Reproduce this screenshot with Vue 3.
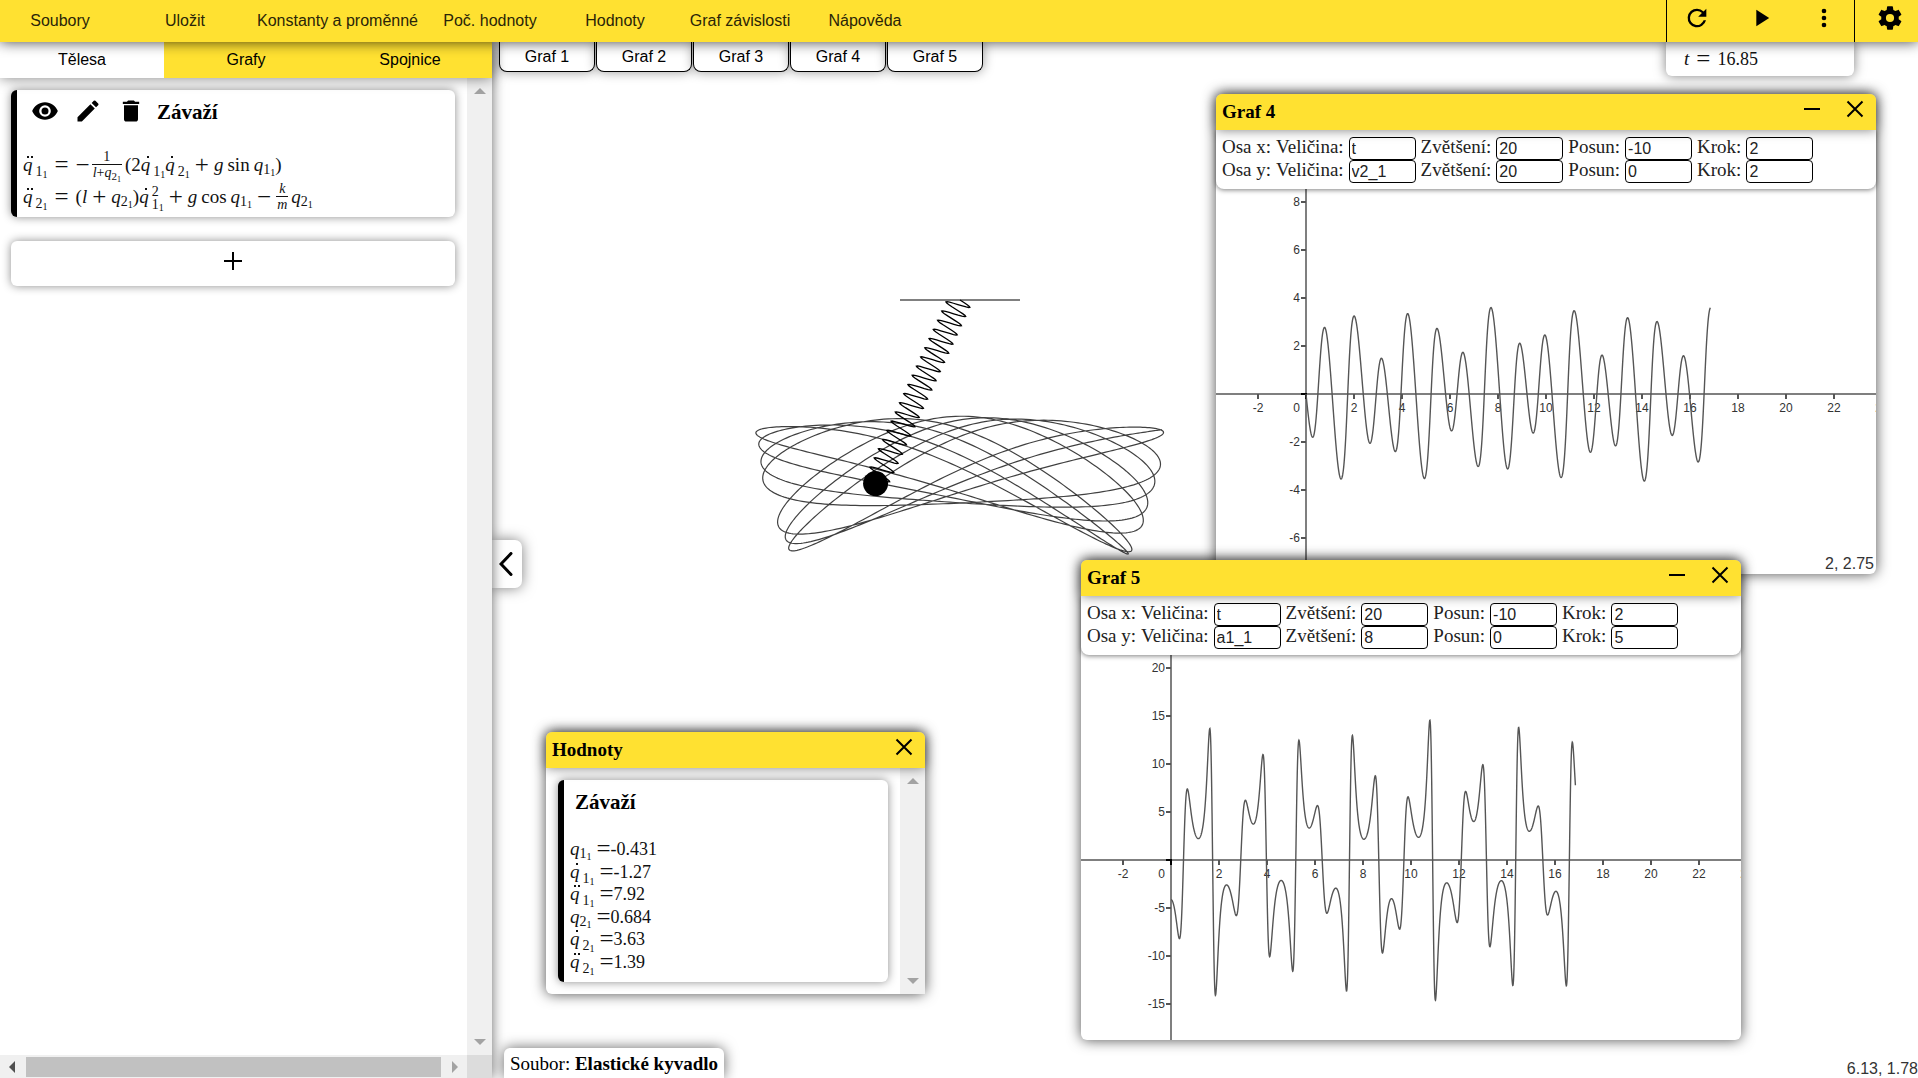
<script setup>
import { h } from 'vue'

/* Elastic pendulum: q1 angle, q2 spring extension */
const L = 1
const G = 9.81
const K = 15
const END = 16.85
const STEP = 0.0002
const SAMPLE = 50

function simulate() {
  let q1 = 1
  let q2 = 1
  let v1 = 0
  let v2 = 0
  const out = []
  const n = Math.round(END / STEP)
  for (let i = 0; i <= n; i++) {
    const a1 = -(2 * v1 * v2 + G * Math.sin(q1)) / (L + q2)
    const a2 = (L + q2) * v1 * v1 + G * Math.cos(q1) - K * q2
    if (i % SAMPLE === 0) out.push({ t: i * STEP, q1, q2, v2, a1 })
    q1 += v1 * STEP
    q2 += v2 * STEP
    v1 += a1 * STEP
    v2 += a2 * STEP
  }
  return out
}

const samples = simulate()
const current = { q1: -0.431, q2: 0.684 }
const toPath = (pts) => 'M' + pts.map(([x, y]) => x.toFixed(2) + ' ' + y.toFixed(2)).join('L')

/* Scene, relative to the pivot */
const SCALE = 120
const place = (s) => [SCALE * (L + s.q2) * Math.sin(s.q1), SCALE * (L + s.q2) * Math.cos(s.q1)]
const trail = toPath(samples.map(place))
const ball = place(current)

function springPath([bx, by]) {
  const len = Math.hypot(bx, by)
  const ux = bx / len
  const uy = by / len
  const coils = 20
  const n = coils * 16
  const pts = []
  for (let i = 0; i <= n; i++) {
    const s = (len * i) / n
    const w = 12 * Math.sin((2 * Math.PI * coils * i) / n)
    pts.push([ux * s + uy * w, uy * s - ux * w])
  }
  return toPath(pts)
}
const spring = springPath(ball)

/* Graph windows */
const UNIT = 1.2
const ORIGIN_X = 90
const ORIGIN_Y = 205

function makeGraph(id, left, top, key, ySize, yStep, quantity, cursor) {
  const sx = 20 * UNIT
  const sy = ySize * UNIT
  const xTicks = []
  for (let v = -2; v <= 24; v += 2) if (v) xTicks.push({ v, x: ORIGIN_X + v * sx })
  const yTicks = []
  for (let i = -3; i <= 4; i++) if (i) yTicks.push({ v: i * yStep, y: ORIGIN_Y - i * yStep * sy })
  return {
    id, left, top, cursor, xTicks, yTicks,
    curve: toPath(samples.map((s) => [ORIGIN_X + s.t * sx, ORIGIN_Y - s[key] * sy])),
    rows: [
      { axis: 'Osa x:', fields: [['Veličina:', 't'], ['Zvětšení:', '20'], ['Posun:', '-10'], ['Krok:', '2']] },
      { axis: 'Osa y:', fields: [['Veličina:', quantity], ['Zvětšení:', String(ySize)], ['Posun:', '0'], ['Krok:', String(yStep)]] },
    ],
  }
}
const graphs = [
  makeGraph('Graf 4', 724, 52, 'v2', 20, 2, 'v2_1', '2, 2.75'),
  makeGraph('Graf 5', 589, 518, 'a1', 8, 5, 'a1_1', ''),
]

/* Formula markup */
const q = (sub, dots = 0, sup = '') => ({ kind: 'q', sub, dots, sup })
const bin = (text) => ({ kind: 'bin', text })
const rel = (text) => ({ kind: 'rel', text })
const neg = { kind: 'neg', text: '−' }
const it = (text) => ({ kind: 'it', text })
const fn = (text) => ({ kind: 'fn', text })
const rm = (text) => ({ kind: 'rm', text })
const num = (text) => ({ kind: 'num', text })
const frac = (top, bottom) => ({ kind: 'frac', top, bottom })

function token(t) {
  if (t.kind === 'q') {
    const subs = h('span', { class: 'sub' }, [t.sub, h('span', { class: 'subsub' }, '1')])
    return h('span', { class: 'var' }, [
      h('span', { class: ['q', 'dots' + t.dots] }, 'q'),
      t.sup
        ? h('span', { class: 'stack' }, [h('span', { class: 'sup' }, t.sup), subs])
        : h('span', { class: t.dots ? 'low' : 'near' }, [subs]),
    ])
  }
  if (t.kind === 'frac') {
    return h('span', { class: 'frac' }, [
      h('span', { class: 'top' }, t.top.map(token)),
      h('span', { class: 'bottom' }, t.bottom.map(token)),
    ])
  }
  return h('span', { class: t.kind }, t.text)
}
const Formula = (props) => h('div', { class: 'formula' }, props.tokens.map(token))
Formula.props = ['tokens']

const equations = [
  [q('1', 2), rel('='), neg, frac([rm('1')], [it('l'), rm('+'), q('2')]), rm('(2'), q('1', 1), q('2', 1), bin('+'), it('g'), fn('sin'), q('1'), rm(')')],
  [q('2', 2), rel('='), rm('('), it('l'), bin('+'), q('2'), rm(')'), q('1', 1, '2'), bin('+'), it('g'), fn('cos'), q('1'), bin('−'), frac([it('k')], [it('m')]), q('2')],
]
const values = [
  ['1', 0, '-0.431'], ['1', 1, '-1.27'], ['1', 2, '7.92'],
  ['2', 0, '0.684'], ['2', 1, '3.63'], ['2', 2, '1.39'],
].map(([sub, dots, value]) => [q(sub, dots), { kind: 'eq', text: '=' }, num(value)])
const time = [it('t'), rel('='), num('16.85')]

const menu = ['Soubory', 'Uložit', 'Konstanty a proměnné', 'Poč. hodnoty', 'Hodnoty', 'Graf závislosti', 'Nápověda']
const tabs = ['Tělesa', 'Grafy', 'Spojnice']
const graphTabs = ['Graf 1', 'Graf 2', 'Graf 3', 'Graf 4', 'Graf 5']
</script>

<template>
  <div class="app">
    <header class="bar">
      <nav class="menu">
        <button v-for="m in menu" :key="m" type="button">{{ m }}</button>
      </nav>
      <div class="controls">
        <button type="button" aria-label="Restart">
          <svg class="icon" viewBox="0 0 24 24"><path d="M17.65 6.35A7.96 7.96 0 0 0 12 4a8 8 0 1 0 7.73 10h-2.08A6 6 0 1 1 12 6c1.66 0 3.14.69 4.22 1.78L13 11h7V4z" /></svg>
        </button>
        <button type="button" aria-label="Spustit">
          <svg class="icon" viewBox="0 0 24 24"><path d="M8 5v14l11-7z" /></svg>
        </button>
        <button type="button" aria-label="Další">
          <svg class="icon" viewBox="0 0 24 24"><path d="M12 8a2 2 0 1 0 0-4 2 2 0 0 0 0 4zm0 2a2 2 0 1 0 0 4 2 2 0 0 0 0-4zm0 6a2 2 0 1 0 0 4 2 2 0 0 0 0-4z" /></svg>
        </button>
      </div>
      <button class="settings" type="button" aria-label="Nastavení">
        <svg class="icon" viewBox="0 0 24 24"><path d="M19.43 12.98c.04-.32.07-.64.07-.98s-.03-.66-.07-.98l2.11-1.65c.19-.15.24-.42.12-.64l-2-3.46c-.12-.22-.39-.3-.61-.22l-2.49 1c-.52-.4-1.08-.73-1.69-.98l-.38-2.65A.49.49 0 0 0 14 2h-4c-.25 0-.46.18-.49.42l-.38 2.65c-.61.25-1.17.59-1.69.98l-2.49-1c-.23-.09-.49 0-.61.22l-2 3.46c-.13.22-.07.49.12.64l2.11 1.65c-.04.32-.07.65-.07.98s.03.66.07.98l-2.11 1.65c-.19.15-.24.42-.12.64l2 3.46c.12.22.39.3.61.22l2.49-1c.52.4 1.08.73 1.69.98l.38 2.65c.03.24.24.42.49.42h4c.25 0 .46-.18.49-.42l.38-2.65c.61-.25 1.17-.59 1.69-.98l2.49 1c.23.09.49 0 .61-.22l2-3.46c.12-.22.07-.49-.12-.64l-2.11-1.65zM12 15.5a3.5 3.5 0 1 1 0-7 3.5 3.5 0 0 1 0 7z" /></svg>
      </button>
    </header>

    <div class="main">
      <aside class="side">
        <div class="tabs">
          <button v-for="(t, i) in tabs" :key="t" type="button" :class="{ active: i === 0 }">{{ t }}</button>
        </div>
        <div class="scroller">
          <div class="list">
            <section class="card">
              <div class="card-head">
                <button type="button" aria-label="Zobrazit">
                  <svg class="icon" viewBox="0 0 24 24"><path d="M12 4.5C7 4.5 2.73 7.61 1 12c1.73 4.39 6 7.5 11 7.5s9.27-3.11 11-7.5c-1.73-4.39-6-7.5-11-7.5zM12 17a5 5 0 1 1 0-10 5 5 0 0 1 0 10zm0-8a3 3 0 1 0 0 6 3 3 0 0 0 0-6z" /></svg>
                </button>
                <button type="button" aria-label="Upravit">
                  <svg class="icon" viewBox="0 0 24 24"><path d="M3 17.25V21h3.75L17.81 9.94l-3.75-3.75L3 17.25zM20.71 7.04a1 1 0 0 0 0-1.41l-2.34-2.34a1 1 0 0 0-1.41 0l-1.83 1.83 3.75 3.75 1.83-1.83z" /></svg>
                </button>
                <button type="button" aria-label="Smazat">
                  <svg class="icon" viewBox="0 0 24 24"><path d="M6 19c0 1.1.9 2 2 2h8c1.1 0 2-.9 2-2V7H6v12zM19 4h-3.500l-1-1h-5l-1 1H5v2h14V4z" /></svg>
                </button>
                <h3>Závaží</h3>
              </div>
              <div class="equations">
                <Formula v-for="(e, i) in equations" :key="i" :tokens="e" />
              </div>
            </section>
            <button class="add" type="button" aria-label="Přidat">
              <svg width="18" height="18" viewBox="0 0 18 18"><path d="M9 0v18M0 9h18" /></svg>
            </button>
          </div>
          <div class="vbar">
            <svg width="12" height="6" viewBox="0 0 12 6"><path d="M0 6 6 0l6 6z" /></svg>
            <svg width="12" height="6" viewBox="0 0 12 6"><path d="M0 0h12L6 6z" /></svg>
          </div>
        </div>
        <div class="hbar">
          <div class="track">
            <svg class="on" width="6" height="12" viewBox="0 0 6 12"><path d="M6 0v12L0 6z" /></svg>
            <div class="thumb"></div>
            <svg width="6" height="12" viewBox="0 0 6 12"><path d="M0 0v12l6-6z" /></svg>
          </div>
          <div class="corner"></div>
        </div>
      </aside>

      <main class="stage">
        <svg class="scene">
          <g transform="translate(468 258)">
            <path class="ceiling" d="M-60 0h120" />
            <path class="trail" :d="trail" />
            <path class="spring" :d="spring" />
            <circle :cx="ball[0]" :cy="ball[1]" r="12.500" />
          </g>
        </svg>

        <div class="top">
          <div class="graph-tabs">
            <button v-for="g in graphTabs" :key="g" type="button">{{ g }}</button>
          </div>
          <div class="time"><Formula :tokens="time" /></div>
        </div>

        <button class="collapse" type="button" aria-label="Skrýt panel">
          <svg width="14" height="24" viewBox="0 0 14 24"><path d="M12 1.500 2 12l10 10.500" /></svg>
        </button>

        <section v-for="g in graphs" :key="g.id" class="window graph" :style="{ left: g.left + 'px', top: g.top + 'px' }">
          <div class="title">
            <h4>{{ g.id }}</h4>
            <button type="button" aria-label="Minimalizovat"><svg width="18" height="18" viewBox="0 0 18 18"><path d="M1 9h16" /></svg></button>
            <button type="button" aria-label="Zavřít"><svg width="18" height="18" viewBox="0 0 18 18"><path d="m1.500 1.500 15 15m0-15-15 15" /></svg></button>
          </div>
          <div class="params">
            <div v-for="r in g.rows" :key="r.axis" class="row">
              <span>{{ r.axis }}</span>
              <label v-for="f in r.fields" :key="f[0]">{{ f[0] }}<input type="text" :value="f[1]" /></label>
            </div>
          </div>
          <svg class="plot">
            <path class="axis" :d="`M${ORIGIN_X} -10V500M0 ${ORIGIN_Y}H800`" />
            <g v-for="t in g.xTicks" :key="'x' + t.v">
              <path class="tick" :d="`M${t.x} ${ORIGIN_Y}v5`" />
              <text :x="t.x" :y="ORIGIN_Y + 18" text-anchor="middle">{{ t.v }}</text>
            </g>
            <g v-for="t in g.yTicks" :key="'y' + t.v">
              <path class="tick" :d="`M${ORIGIN_X} ${t.y}h-5`" />
              <text :x="ORIGIN_X - 6" :y="t.y + 4" text-anchor="end">{{ t.v }}</text>
            </g>
            <path class="origin" :d="`M${ORIGIN_X - 5} ${ORIGIN_Y}h5v5`" />
            <text :x="ORIGIN_X - 6" :y="ORIGIN_Y + 18" text-anchor="end">0</text>
            <path class="curve" :d="g.curve" />
          </svg>
          <div v-if="g.cursor" class="cursor">{{ g.cursor }}</div>
        </section>

        <section class="window values" :style="{ left: '54px', top: '690px' }">
          <div class="title">
            <h4>Hodnoty</h4>
            <button type="button" aria-label="Zavřít"><svg width="18" height="18" viewBox="0 0 18 18"><path d="m1.500 1.500 15 15m0-15-15 15" /></svg></button>
          </div>
          <div class="values-body">
            <div class="card">
              <div class="card-head"><h3>Závaží</h3></div>
              <div class="value-list">
                <Formula v-for="(v, i) in values" :key="i" :tokens="v" />
              </div>
            </div>
            <div class="vbar">
              <svg width="12" height="6" viewBox="0 0 12 6"><path d="M0 6 6 0l6 6z" /></svg>
              <svg width="12" height="6" viewBox="0 0 12 6"><path d="M0 0h12L6 6z" /></svg>
            </div>
          </div>
        </section>

        <footer class="foot">
          <div class="file">Soubor: <b>Elastické kyvadlo</b></div>
          <div class="pointer">6.13, 1.78</div>
        </footer>
      </main>
    </div>
  </div>
</template>

<style>
.formula {
  font-family: "Liberation Serif", "Times New Roman", serif;
  font-size: 19px;
  white-space: nowrap;
  color: #111;
}
.formula .q {
  display: inline-block;
  position: relative;
  font-style: italic;
  line-height: 20px;
}
.formula .dots1::before,
.formula .dots2::before {
  content: "";
  position: absolute;
  left: 6px;
  top: 1px;
  width: 2px;
  height: 2px;
  background: #111;
}
.formula .dots2::before {
  left: 4px;
  box-shadow: 4px 0 #111;
}
.formula .sub {
  font-size: 14px;
  line-height: 0;
}
.formula .subsub {
  font-size: 10px;
  vertical-align: -2px;
  line-height: 0;
}
.formula .near {
  vertical-align: -3px;
  line-height: 0;
}
.formula .low {
  vertical-align: -5px;
  line-height: 0;
  margin-left: 3px;
}
.formula .stack {
  display: inline-flex;
  flex-direction: column;
  vertical-align: 7px;
  margin-left: 3px;
}
.formula .stack .sup {
  font-size: 14px;
  line-height: 12px;
}
.formula .stack .sub {
  line-height: 14px;
}
.formula .it {
  font-style: italic;
}
.formula .fn {
  margin: 0 4px;
}
.formula .num {
  font-size: 18px;
}
.formula .rel,
.formula .bin,
.formula .neg,
.formula .eq {
  font-size: 25px;
  line-height: 0;
  vertical-align: -2px;
}
.formula .rel {
  margin: 0 7px;
}
.formula .bin {
  margin: 0 5px;
}
.formula .neg {
  margin-right: 2px;
}
.formula .eq {
  margin-left: 5px;
}
.formula .frac {
  display: inline-flex;
  flex-direction: column;
  align-items: center;
  vertical-align: 10px;
  margin-right: 3px;
  font-size: 14px;
}
.formula .frac .top {
  line-height: 13px;
  padding-bottom: 1px;
}
.formula .frac .bottom {
  align-self: stretch;
  padding: 0 1px;
  text-align: center;
  border-top: 1px solid #111;
  line-height: 15px;
}
.formula .frac .q {
  line-height: 15px;
}
.formula .frac .sub {
  font-size: 11px;
}
.formula .frac .subsub {
  font-size: 8px;
}
</style>

<style scoped>
.app {
  display: flex;
  flex-direction: column;
  height: 100vh;
  overflow: hidden;
  background: #fff;
  color: #000;
  font: 16px "Liberation Sans", Arial, sans-serif;
}
button {
  border: 0;
  padding: 0;
  background: none;
  color: inherit;
  font: inherit;
  cursor: pointer;
}
h3,
h4 {
  margin: 0;
  font-family: "Liberation Serif", "Times New Roman", serif;
  font-weight: bold;
}
.icon {
  display: block;
  width: 28px;
  height: 28px;
}
.bar {
  display: flex;
  height: 42px;
  flex: none;
  position: relative;
  z-index: 10;
  background: #ffe131;
  box-shadow: 0 0 14px rgba(0, 0, 0, 0.75);
}
.menu {
  display: flex;
  gap: 5px;
  flex: 1;
  color: #2a2508;
}
.menu button {
  min-width: 120px;
  padding: 0 7px;
}
.controls {
  display: flex;
  gap: 4px;
  width: 187px;
  border: solid #000;
  border-width: 0 1px;
}
.controls button {
  display: flex;
  flex: 1;
  justify-content: center;
  padding-top: 4px;
}
.settings {
  display: flex;
  justify-content: center;
  width: 63px;
  padding: 4px 0 0 6px;
}
.main {
  display: flex;
  flex: 1;
  min-height: 0;
}
.side {
  display: flex;
  flex-direction: column;
  width: 492px;
  flex: none;
  position: relative;
  z-index: 5;
  background: #fff;
  box-shadow: 0 0 12px rgba(0, 0, 0, 0.6);
}
.tabs {
  display: flex;
  height: 36px;
  position: relative;
  z-index: 2;
  background: #ffe131;
  box-shadow: 0 0 14px rgba(0, 0, 0, 0.5);
}
.tabs button {
  flex: 1;
  padding-bottom: 1px;
}
.tabs .active {
  background: #fff;
}
.scroller {
  display: flex;
  flex: 1;
}
.list {
  display: flex;
  flex-direction: column;
  gap: 24px;
  flex: 1;
  padding: 12px 12px 0 11px;
}
.card {
  box-sizing: border-box;
  padding: 7px 6px 5px;
  border-left: 6px solid #000;
  border-radius: 6px;
  background: #fff;
  box-shadow: 0 0 10px rgba(0, 0, 0, 0.45);
}
.card-head {
  display: flex;
  height: 28px;
  margin-bottom: 23px;
}
.card-head button {
  display: flex;
  justify-content: center;
  width: 43px;
}
.card-head h3 {
  margin-left: 5px;
  font-size: 21px;
  line-height: 30px;
}
.equations > * {
  height: 32px;
  line-height: 34px;
}
.add {
  display: flex;
  align-items: center;
  justify-content: center;
  height: 45px;
  padding-bottom: 6px;
  border-radius: 6px;
  background: #fff;
  box-shadow: 0 0 10px rgba(0, 0, 0, 0.45);
}
.add path,
.title path,
.collapse path {
  fill: none;
  stroke: #000;
  stroke-width: 2;
}
.vbar {
  box-sizing: border-box;
  display: flex;
  flex-direction: column;
  justify-content: space-between;
  align-items: center;
  width: 25px;
  padding: 10px 0;
  background: #f0f0f0;
  fill: #a3a3a3;
}
.hbar {
  display: flex;
  height: 23px;
}
.track {
  display: flex;
  align-items: center;
  justify-content: space-between;
  gap: 11px;
  flex: 1;
  padding: 0 9px;
  background: #f0f0f0;
  fill: #a3a3a3;
}
.track .on {
  fill: #505050;
}
.thumb {
  flex: 1;
  height: 20px;
  background: #c1c1c1;
}
.corner {
  width: 25px;
  background: #dcdcdc;
}
.stage {
  display: flex;
  flex-direction: column;
  justify-content: space-between;
  flex: 1;
  min-width: 0;
  position: relative;
  overflow: hidden;
}
.scene {
  position: absolute;
  inset: 0;
  width: 100%;
  height: 100%;
}
.scene path {
  fill: none;
}
.scene .ceiling {
  stroke: #808080;
  stroke-width: 2;
}
.scene .trail {
  stroke: #000;
  stroke-width: 1.2;
  stroke-opacity: 0.75;
}
.scene .spring {
  stroke: #000;
  stroke-width: 1.3;
}
.top {
  display: flex;
  justify-content: space-between;
  align-items: flex-start;
  padding: 0 64px 0 7px;
  position: relative;
}
.graph-tabs {
  display: flex;
  gap: 1px;
}
.graph-tabs button {
  width: 96px;
  height: 30px;
  border: 1px solid #000;
  border-top: 0;
  border-radius: 0 0 8px 8px;
  background: #fff;
  box-shadow: 0 0 12px rgba(0, 0, 0, 0.4);
}
.time {
  box-sizing: border-box;
  width: 188px;
  height: 34px;
  padding-left: 18px;
  border-radius: 0 0 6px 6px;
  background: #fff;
  box-shadow: 0 0 12px rgba(0, 0, 0, 0.5);
  line-height: 34px;
}
.collapse {
  display: flex;
  align-items: center;
  justify-content: center;
  position: absolute;
  left: 0;
  top: calc(50% - 20px);
  width: 30px;
  height: 48px;
  padding-right: 2px;
  border-radius: 0 7px 7px 0;
  background: #fff;
  box-shadow: 0 0 14px rgba(0, 0, 0, 0.5);
}
.collapse path {
  stroke-width: 3;
  stroke-linecap: round;
}
.window {
  display: flex;
  flex-direction: column;
  position: absolute;
  border-radius: 6px;
  background: #fff;
  box-shadow: 0 0 14px rgba(0, 0, 0, 0.7);
}
.graph {
  width: 660px;
  height: 480px;
}
.values {
  width: 379px;
}
.title {
  display: flex;
  height: 36px;
  flex: none;
  position: relative;
  z-index: 2;
  border-radius: 6px 6px 0 0;
  background: #ffe131;
  box-shadow: 0 0 12px rgba(0, 0, 0, 0.5);
}
.title h4 {
  flex: 1;
  padding-left: 6px;
  font-size: 19px;
  line-height: 35px;
}
.title button {
  display: flex;
  align-items: center;
  justify-content: center;
  width: 43px;
  height: 30px;
}
.params {
  position: relative;
  z-index: 1;
  padding: 7px 6px 6px;
  border-radius: 0 0 8px 8px;
  background: #fff;
  box-shadow: 0 1px 5px rgba(0, 0, 0, 0.5);
  color: #222;
  font: 19px "Liberation Serif", "Times New Roman", serif;
}
.row,
.row label {
  display: flex;
  gap: 5px;
  height: 23px;
  line-height: 20px;
}
.row input {
  box-sizing: border-box;
  width: 67px;
  height: 23px;
  padding: 0 2px;
  border: 1px solid #000;
  border-radius: 4px;
  background: transparent;
  color: #222;
  font: 16px "Liberation Sans", Arial, sans-serif;
}
.plot {
  display: block;
  width: 100%;
  flex: 1;
  min-height: 0;
  border-radius: 0 0 6px 6px;
}
.plot path {
  fill: none;
}
.plot text {
  fill: #333;
  font: 12px "Liberation Sans", Arial, sans-serif;
}
.plot .axis {
  stroke: #7f7f7f;
  stroke-width: 2;
}
.plot .tick {
  stroke: #555;
  stroke-width: 2;
}
.plot .origin {
  stroke: #000;
  stroke-width: 2;
}
.plot .curve {
  stroke: #555;
  stroke-width: 1.4;
}
.cursor {
  position: absolute;
  right: 2px;
  bottom: 1px;
  color: #333;
}
.values-body {
  display: flex;
}
.values-body .card {
  flex: 1;
  margin: 12px;
  padding-bottom: 9px;
}
.value-list {
  display: grid;
  grid-auto-rows: 1fr;
  height: 135px;
  line-height: 22px;
}
.foot {
  display: flex;
  justify-content: space-between;
  align-items: flex-end;
  padding-left: 12px;
}
.file {
  position: relative;
  box-sizing: border-box;
  height: 30px;
  padding: 0 6px;
  border-radius: 6px 6px 0 0;
  background: #fff;
  box-shadow: 0 0 14px rgba(0, 0, 0, 0.6);
  font: 19px/32px "Liberation Serif", "Times New Roman", serif;
}
.pointer {
  color: #333;
  line-height: 18px;
}
</style>
